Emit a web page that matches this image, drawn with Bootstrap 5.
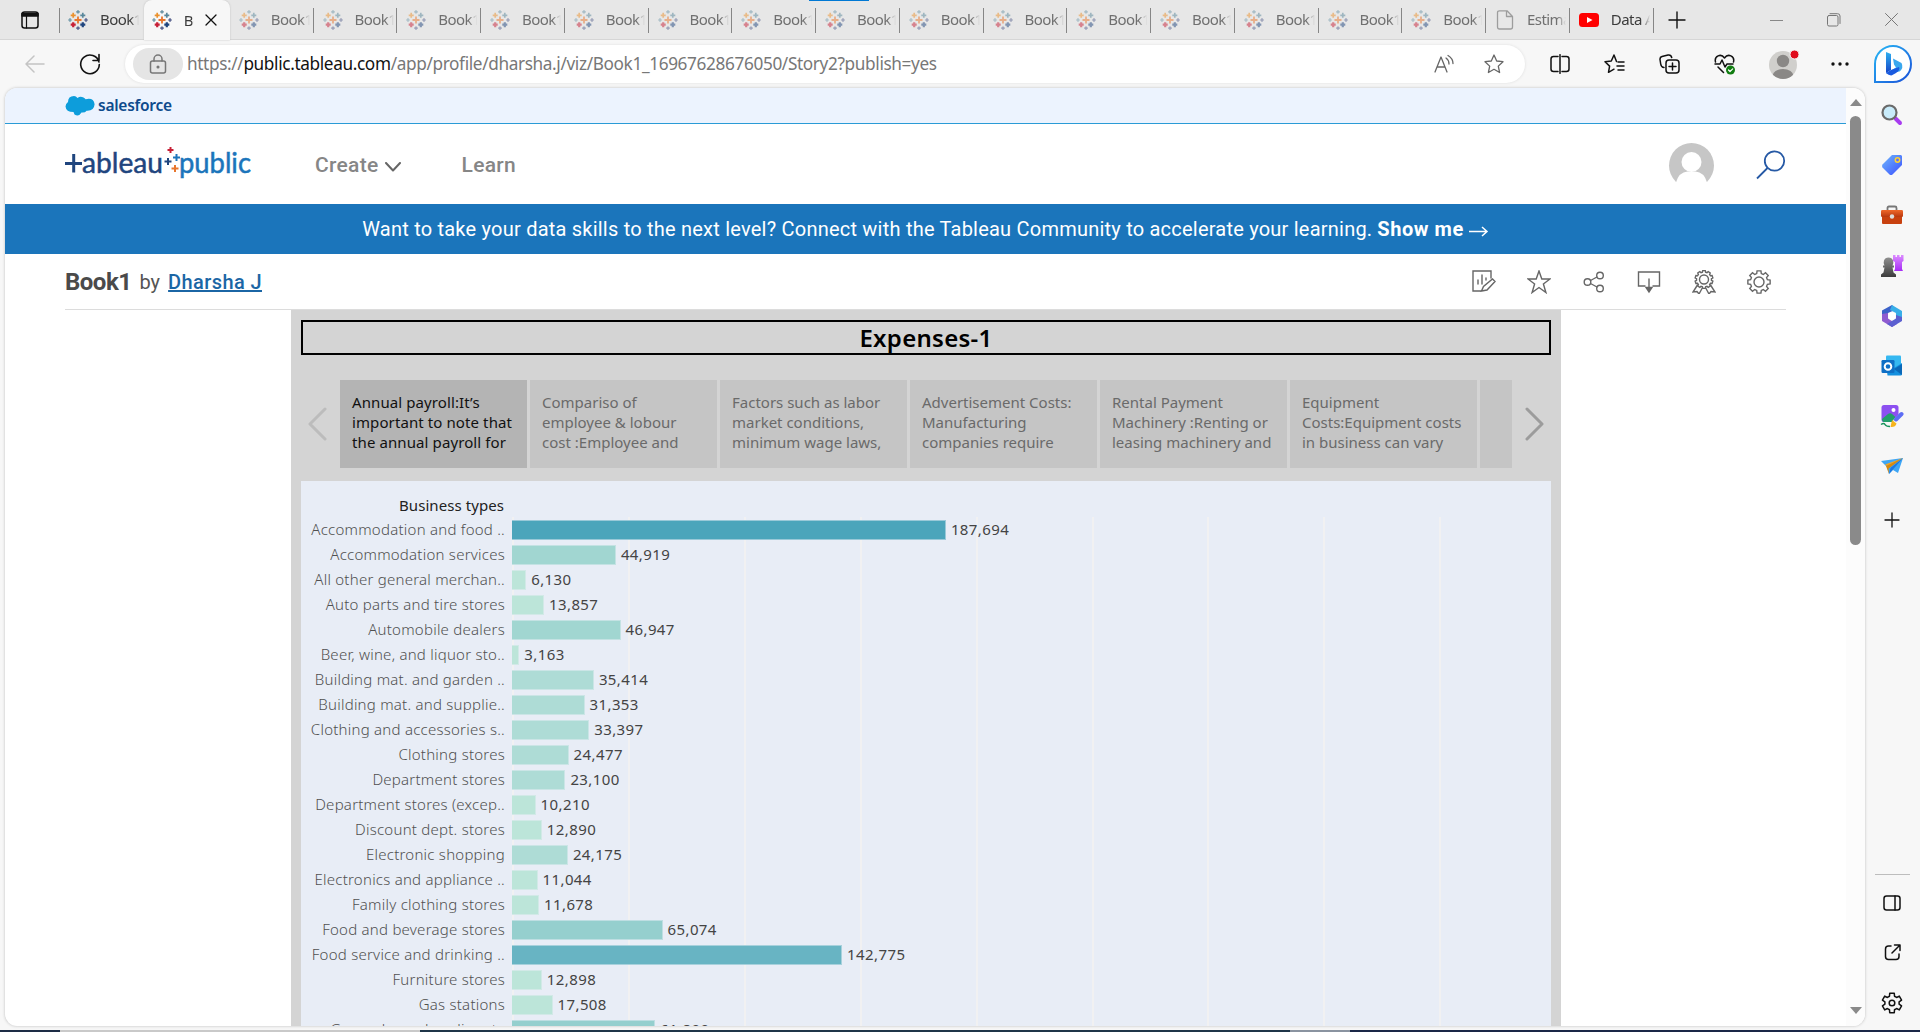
<!DOCTYPE html>
<html lang="en">
<head>
<meta charset="utf-8">
<title>Book1 by Dharsha J | Tableau Public</title>
<link href="https://cdn.jsdelivr.net/npm/bootstrap@5.3.0/dist/css/bootstrap.min.css" rel="stylesheet">
<style>
body{width:1920px;height:1032px;overflow:hidden;background:#f7f7f7;font-family:"Noto Sans","Open Sans",sans-serif;color:#333}
svg{display:block;flex:none}
.ic{fill:none;stroke:#111;stroke-width:1.5;stroke-linecap:round;stroke-linejoin:round}
.tabstrip{height:40px;background:#e7e7e7;border-bottom:1px solid #d6d6d6;position:relative}
.menu-btn{width:60px;height:39px;padding-left:21px;position:relative}
.btab{width:83.75px;height:39px;padding-left:8px;position:relative;font-size:15px;color:#707070}
.btab.dim,.btab.sep{padding-left:9px}
.btab.sep::after,.menu-btn::after{content:"";position:absolute;right:0;top:8px;width:1px;height:25px;background:#868686}
.btab .glyph{width:20px}
.btab .t{margin-left:12px;width:39px;overflow:hidden;white-space:nowrap;letter-spacing:-.55px;-webkit-mask-image:linear-gradient(90deg,#000 78%,transparent 100%);mask-image:linear-gradient(90deg,#000 78%,transparent 100%)}
.btab.dim svg{opacity:.5}
.btab.lit{color:#3c3c3c}
.btab.active{width:86px;height:40px;background:#f7f7f7;border-radius:8px 8px 0 0;color:#3c3c3c;box-shadow:0 0 2px #bbb}
.btab.active .t{width:10px}
.accent{position:absolute;left:809px;top:0;width:60px;height:1px;background:#0078d4}
.toolbar{height:48px;background:#f7f7f7}
.cell{width:55px;height:48px}
.addr{width:1400px;height:38px;background:#fff;border-radius:19px;box-shadow:0 0 3px #ddd;padding-left:8px}
.lock{width:50px;height:32px;border-radius:16px;background:#e5e5e5}
.url{font-size:17.2px;letter-spacing:-.355px;color:#777;margin-left:4px;white-space:nowrap}
.url b{font-weight:400;color:#111}
.page{width:1860px;height:938px;margin-left:5px;background:#fff;border-radius:12px;overflow:hidden;box-shadow:0 0 3px #bbb}
.doc{width:1841px;height:938px;overflow:hidden}
.sfbar{height:36px;background:#ecf3fe;border-bottom:1px solid #2a9bd6;padding-left:60px}
.sfname{font-size:15.5px;letter-spacing:-.25px;font-weight:600;color:#0d4a8c;margin-left:3px}
.hdr{height:80px;padding-left:60px;padding-right:60px}
.nav-t{font-family:Roboto,sans-serif;font-weight:500;font-size:21px;letter-spacing:.3px;color:#868686;margin-top:3px}
.promo{height:50px;background:#1b75bb;color:#fff;font-family:Roboto,sans-serif;font-size:20px;font-weight:400;letter-spacing:.22px}
.promo b{letter-spacing:.55px;margin-left:5px}
.titlerow{height:56px;margin:0 60px;border-bottom:1px solid #dcdcdc;font-family:Roboto,sans-serif;white-space:nowrap;width:1721px}
.wb{font-size:24px;font-weight:700;letter-spacing:-.5px;color:#4a4a4a}
.by{font-size:20px;color:#555;margin-left:8px}
.au{font-size:20px;color:#1b66a5;margin-left:8px;font-weight:500;letter-spacing:.4px}
.viz{width:1270px;height:716px;margin-left:286px;background:#d4d4d4;padding:10px 10px 0}
.vtitle{height:35px;border:2px solid #000;color:#000;font-weight:600;font-size:24px;letter-spacing:.28px}
.story{height:88px;margin-top:25px}
.arrow{width:39px}
.pt{width:187px;height:88px;background:#c5c5c5;color:#6a6a6a;font-size:15px;line-height:20px;padding:12px 0 0 12px;white-space:nowrap}
.pt.on{background:#b4b4b4;color:#111;letter-spacing:.1px}
.pt.cut{width:32px}
.panel{margin-top:13px;height:560px;background:#e8edf6;padding-top:12px}
.bt{height:24px;width:203px;font-size:15px;line-height:24px;color:#222;letter-spacing:.07px}
.plot{background-image:repeating-linear-gradient(90deg,#f1f1f2 0 2px,transparent 2px 115.9px);background-position:211px 0;background-repeat:no-repeat;background-size:929px 100%}
.r{height:25px;font-size:15px;line-height:25px;white-space:nowrap}
.rl{width:204px;margin-right:7px;color:#505050;font-weight:300;letter-spacing:.24px}
.bar{height:20px;border:solid rgba(232,237,246,.5);border-width:1px 1px 1px 0}
.rv{margin-left:5px;color:#444;letter-spacing:.4px}
.sb{width:19px;background:#fcfcfc}
.thumb{width:11px;height:429px;border-radius:6px;background:#8a8a8a;margin-top:10px}
.side{width:54px;height:942px;padding-top:2px}
.side .s{height:50.2px}
.rule-s{width:35px;height:1px;background:#bdbdbd;margin-bottom:2px}
.bottom{height:2px;background:linear-gradient(90deg,#1d2c45 0 60px,#c9c9c9 60px 420px,#1f3548 420px 1290px,#8a93a0 1290px 1350px,#1a2747 1350px)}
</style>
<script src="https://cdn.jsdelivr.net/npm/bootstrap@5.3.0/dist/js/bootstrap.bundle.min.js"></script>
</head>
<body>
<svg width="0" height="0" style="position:absolute">
<defs>
<symbol id="tab" viewBox="0 0 20 20"><g fill="none" stroke-width="1.7">
<path stroke="#e8762d" stroke-width="1.8" d="M10 6.5v7M6.5 10h7"/>
<path stroke="#eb912c" d="M5.2 2.8v5M2.7 5.3h5"/><path stroke="#59879b" d="M14.8 2.8v5M12.3 5.3h5"/>
<path stroke="#c72037" stroke-width="2.2" d="M5.2 12.2v5M2.7 14.7h5"/><path stroke="#1f457e" stroke-width="2.2" d="M14.8 12.2v5M12.3 14.7h5"/>
<path stroke="#6f97a8" d="M10 .2v3.4M8.3 1.9h3.4"/><path stroke="#5c6692" d="M10 16.4v3.4M8.3 18.1h3.4M18 8.3v3.4M16.3 10h3.4"/><path stroke="#7aa0b0" d="M2 8.3v3.4M.3 10h3.4"/></g></symbol>
<linearGradient id="bl" x1="0" y1="0" x2="1" y2="1"><stop offset="0" stop-color="#28b8f5"/><stop offset="1" stop-color="#1a50d8"/></linearGradient>
<linearGradient id="bg" x1="0" y1="0" x2="0" y2="1"><stop offset="0" stop-color="#2fb0f0"/><stop offset="1" stop-color="#1546c8"/></linearGradient>
<linearGradient id="tg" x1="0" y1="0" x2="1" y2="1"><stop offset="0" stop-color="#6fb8fb"/><stop offset="1" stop-color="#3b4fff"/></linearGradient>
<linearGradient id="pk" x1="0" y1="0" x2="0" y2="1"><stop offset="0" stop-color="#dc8cff"/><stop offset="1" stop-color="#a62cf5"/></linearGradient>
<linearGradient id="og" x1="0" y1="0" x2="0" y2="1"><stop offset="0" stop-color="#f0682a"/><stop offset="1" stop-color="#b8380f"/></linearGradient>
<linearGradient id="gy" x1="0" y1="0" x2="0" y2="1"><stop offset="0" stop-color="#909090"/><stop offset="1" stop-color="#3c3c3c"/></linearGradient>
</defs></svg>

<div class="tabstrip d-flex align-items-start" id="tabs">
  <div class="menu-btn d-flex align-items-center"><svg class="ic" width="18" height="18" viewBox="0 0 18 18"><rect x="1" y="1" width="16" height="16" rx="2.5"/><path fill="#111" d="M1 2.5h16V5H1z"/><path d="M5.5 5v12" stroke-width="1.2"/></svg></div>
</div>

<div class="toolbar d-flex align-items-center">
  <div class="d-flex justify-content-center cell" style="margin-left:7px"><svg class="align-self-center ic" style="stroke:#c4c4c4;margin-top:-1px" width="20" height="18"><path d="M19 9H1M9 1L1 9l8 8"/></svg></div>
  <div class="d-flex align-items-center justify-content-center cell"><svg class="ic" style="margin-top:-1px" width="22" height="22"><path d="M20 9A9.3 9.3 0 1 0 20.3 11.500M20 1.500V7.500H14" stroke-width="1.6"/></svg></div>
  <div class="addr d-flex align-items-center ms-auto">
    <div class="lock d-flex align-items-center justify-content-center"><svg class="ic" style="stroke:#777" width="18" height="20"><rect x="1.500" y="7" width="15" height="12" rx="2"/><path d="M5 7V5a4 4 0 0 1 8 0v2"/><circle cx="9" cy="13" r=".8" fill="#777"/></svg></div>
    <div class="url">https://<b>public.tableau.com</b>/app/profile/dharsha.j/viz/Book1_16967628676050/Story2?publish=yes</div>
    <svg class="ic ms-auto" style="stroke:#666" width="20" height="20"><path stroke-width="1.300" d="M1 18L7 3l6 15M3 13h8M12 4q3 2 3 6M14 1.500q5 3 5 8"/></svg>
    <svg class="ic" style="stroke:#666;margin-left:30px;margin-right:21px" width="20" height="20"><path stroke-width="1.300" d="M10 1l2.700 6 6.300.7-4.700 4.400 1.300 6.400-5.600-3.200-5.600 3.200 1.300-6.400L1 7.700 7.300 7z"/></svg>
  </div>
  <div style="width:7px"></div>
  <div class="cell d-flex align-items-center justify-content-center"><svg class="ic" width="20" height="20"><path d="M8 2.500H3.500Q1 2.500 1 5v10q0 2.500 2.500 2.500H8M12 2.500h4.500Q19 2.500 19 5v10q0 2.500-2.500 2.500H12M10 .7v18.600"/></svg></div>
  <div class="cell d-flex align-items-center justify-content-center"><svg class="ic" width="21" height="20"><path d="M12.500 7.500L10 1 7.300 7 1 7.700l4.600 4.400L4.500 18.300 10 15.200M14 8h6M13 12h7M14 16h6"/></svg></div>
  <div class="cell d-flex align-items-center justify-content-center"><svg class="ic" width="21" height="20"><rect x="7" y="6" width="13" height="13" rx="3"/><path d="M13.500 9v7M10 12.500h7M5 13.500C2.500 13.500 2 12 1.700 10L1 5.500Q.8 3 3 2.500L9 1q3-.5 3.700 2.500"/></svg></div>
  <div class="cell d-flex align-items-center justify-content-center"><svg class="ic" width="22" height="21"><path d="M1.500 8C0 2 7-1 10.500 4 14-1 21 2 19.500 8M1 10h5l2-4 3 7 2-3h6M4 13l5.500 5.500"/><circle cx="16.500" cy="16" r="4.500" fill="#107c10" stroke="none"/><path stroke="#fff" stroke-width="1.200" d="M14.500 16l1.500 1.500 2.700-2.700"/></svg></div>
  <div class="d-flex align-items-center justify-content-center" style="width:62px"><svg style="margin-left:2px" width="30" height="30"><clipPath id="c1"><circle cx="14" cy="16" r="14"/></clipPath><g clip-path="url(#c1)"><path fill="#d0cfcc" d="M0 0h30v30H0z"/><circle cx="14" cy="12" r="6.200" fill="#8a8886"/><ellipse cx="14" cy="27" rx="10.500" ry="7" fill="#8a8886"/></g><circle cx="25.500" cy="5.500" r="4.500" fill="#e00b1c" stroke="#f7f7f7"/></svg></div>
  <div class="d-flex align-items-center justify-content-center" style="width:51px"><svg width="18" height="4" fill="#111"><circle cx="2" cy="2" r="1.700"/><circle cx="9" cy="2" r="1.700"/><circle cx="16" cy="2" r="1.700"/></svg></div>
  <div class="cell d-flex align-items-center justify-content-center"><svg width="40" height="40"><path d="M2 38V20A18 18 0 1 1 20 38z" fill="#fff" stroke="url(#bl)" stroke-width="2"/><path fill="url(#bg)" d="M13 8l5 2v16l-5 3z"/><path fill="#3aa7ee" d="M20 14.500l8.500 4.500q2.500 5-2 8.500L13 29.500l10-6-2-3z"/><path fill="#1a5be0" d="M13 29l5-3 8-3q1.500 3-3 6l-4 2.300q-3 .5-6-2.300z"/></svg></div>
</div>

<div class="d-flex" style="height:942px">
  <div class="page d-flex">
    <div class="doc">
      <div class="sfbar d-flex align-items-center"><svg width="30" height="21"><path fill="#0d9ddb" d="M3 7Q3 1 9 1q2 0 3.500 2Q15 1 18 2.200q2 1 2.600 2 8-2 9 5-.6 7-8 6.500Q20 18 16.500 17.500 14 22 9.500 19.500L8.500 17Q1 17 .5 11.500 .6 8.500 3 7z"/></svg><span class="sfname">salesforce</span></div>
      <div class="hdr d-flex align-items-center">
        <svg style="margin-top:-2px" width="187" height="44" viewBox="0 0 187 44" font-family="Lato,sans-serif" font-size="28"><path stroke="#1f457e" stroke-width="3" d="M0 22.500h17M8.700 13v18.500"/><text x="17" y="31.500" textLength="81" lengthAdjust="spacingAndGlyphs" fill="#1f457e" stroke="#1f457e" stroke-width=".5">ableau</text><text x="114" y="31.500" textLength="72" lengthAdjust="spacingAndGlyphs" fill="#1b75bb" stroke="#1b75bb" stroke-width=".5">public</text><g stroke-width="2"><path stroke="#c72037" d="M105.500 6v6M102.500 9h6"/><path stroke="#1f457e" d="M103 17v7M99.500 20.500h7"/><path stroke="#1b75bb" d="M111.500 13v7M108 16.500h7"/><path stroke="#e8762d" d="M110 24v7M106.500 27.500h7"/></g></svg>
        <span class="nav-t" style="margin-left:63px">Create</span><svg class="ic" style="stroke:#666;stroke-width:2;margin:5px 0 0 6px" width="16" height="10"><path d="M1 1l7 7.500L15 1"/></svg>
        <span class="nav-t" style="margin-left:61px">Learn</span>
        <svg class="ms-auto" width="46" height="44"><clipPath id="c2"><path d="M0 0h46v41H0z"/></clipPath><g clip-path="url(#c2)"><circle cx="23.500" cy="23.500" r="22.500" fill="#c6c6c6"/><circle cx="23.500" cy="20" r="10" fill="#fff"/><path fill="#fff" d="M7.500 42q3-12 12-12.500h8Q36.500 30 39.500 42z"/></g></svg>
        <svg style="margin-left:42px;margin-top:2px" width="30" height="30" fill="none" stroke="#2659a5" stroke-width="1.800"><circle cx="18.500" cy="11" r="9.700"/><path d="M11.500 18L1 28.500"/></svg>
      </div>
      <div class="promo d-flex align-items-center justify-content-center"><span>Want to take your data skills to the next level? Connect with the Tableau Community to accelerate your learning.</span><b>Show me</b><svg style="margin:4px 0 0 5px" width="20" height="11" fill="none" stroke="#fff" stroke-width="1.500"><path d="M0 5.500h18M13 1l5 4.500-5 4.500"/></svg></div>
      <div class="titlerow d-flex align-items-center">
        <span class="wb">Book1</span><span class="by">by</span><u class="au">Dharsha J</u>
        <div class="d-flex ms-auto" id="acts"></div>
      </div>
      <div class="viz">
        <div class="vtitle d-flex align-items-center justify-content-center"><span>Expenses-1</span></div>
        <div class="story d-flex">
          <div class="arrow d-flex align-items-center"><svg class="ic" style="stroke:#bcbcbc;stroke-width:3;margin-left:6px" width="20" height="34"><path d="M18 2L3 17l15 15"/></svg></div>
          <div class="d-flex" style="gap:3px">
            <div class="pt on">Annual payroll:It’s<br>important to note that<br>the annual payroll for</div>
            <div class="pt">Compariso of<br>employee &amp; lobour<br>cost :Employee and</div>
            <div class="pt">Factors such as labor<br>market conditions,<br>minimum wage laws,</div>
            <div class="pt">Advertisement Costs:<br>Manufacturing<br>companies require</div>
            <div class="pt">Rental Payment<br>Machinery :Renting or<br>leasing machinery and</div>
            <div class="pt">Equipment<br>Costs:Equipment costs<br>in business can vary</div>
            <div class="pt cut"></div>
          </div>
          <div class="ms-auto d-flex align-items-center"><svg class="ic" style="stroke:#9c9c9c;stroke-width:3;margin-right:6px" width="20" height="34"><path d="M2 2l15 15L2 32"/></svg></div>
        </div>
        <div class="panel">
          <div class="bt text-end">Business types</div>
          <div class="plot" id="plot"></div>
        </div>
      </div>
    </div>
    <div class="sb d-flex flex-column align-items-center">
      <svg width="12" height="7" style="margin-top:11px"><path fill="#8a8a8a" d="M0 7L6 0l6 7z"/></svg>
      <div class="thumb"></div>
      <svg width="12" height="7" style="margin-top:auto;margin-bottom:12px"><path fill="#8a8a8a" d="M0 0l6 7 6-7z"/></svg>
    </div>
  </div>
  <div class="side d-flex flex-column align-items-center">
    <div class="s d-flex align-items-center"><svg width="24" height="24"><path stroke="#a83cf0" stroke-width="4" stroke-linecap="round" d="M15.500 15.500l4.500 4.500"/><circle cx="9.500" cy="9.500" r="7" fill="#c8ebfa" stroke="#6a6a6a" stroke-width="2.200"/></svg></div>
    <div class="s d-flex align-items-center"><svg width="24" height="24"><path fill="url(#tg)" d="M12 2h9l1 1v9L12.500 21.500q-1.500 1-3 0l-7-7q-1-1.500 0-3z"/><circle cx="17.500" cy="7" r="2.200" fill="#5f6fff" stroke="#ffd42e" stroke-width="1.500"/></svg></div>
    <div class="s d-flex align-items-center"><svg width="24" height="24"><path fill="none" stroke="#777" stroke-width="1.800" d="M7.500 8V5q0-1.500 1.500-1.500h6q1.500 0 1.500 1.500v3"/><rect x="2" y="11" width="20" height="10" rx="1" fill="#c8410f"/><rect x="1" y="7" width="22" height="7" rx="1.200" fill="url(#og)"/><circle cx="12" cy="13.500" r="2.200" fill="#ddd"/></svg></div>
    <div class="s d-flex align-items-center"><svg width="24" height="24"><path fill="url(#pk)" d="M13 1h2.500v2H17V1h2.500v2H21V1h2.500v6l-1.500 1v7l1 2h-9l1-2V8l-2-1z"/><path fill="url(#gy)" d="M1 23v-2.500l2.500-2 1-5H3v-2h1.500q-1.500-2-.5-5Q5 3.500 8.500 3.500T13 6.500q1 3-.5 5H14v2h-1.500l1 5 2.500 2V23z"/></svg></div>
    <div class="s d-flex align-items-center"><svg width="24" height="24"><path fill="#3b62c9" d="M12 1L2 6.500V14l6-2V9l8-3.500z"/><path fill="#38aee8" d="M12 1l10 6v9l-6-3.500V9L10 6z"/><path fill="#8e5bd0" d="M2 10v7l10 6 5-3-6-3.500-3-2V9z"/><path fill="#5b5fd0" d="M22 13v4l-10 6-5-3 9-5.500V11z"/><circle cx="12" cy="12" r="3.800" fill="#fff"/></svg></div>
    <div class="s d-flex align-items-center"><svg width="24" height="24"><rect x="6" y="1.500" width="15" height="13" rx="1" fill="#35b8f1"/><path fill="#1490df" d="M6 10l8 4 8-5v11q0 1.500-1.500 1.500h-13z"/><path fill="#0a68b8" d="M14 15l8-5v11z"/><rect x="1.500" y="6" width="13" height="13" rx="1.200" fill="#0f6fc5"/><circle cx="8" cy="12.500" r="3.300" fill="none" stroke="#fff" stroke-width="2"/></svg></div>
    <div class="s d-flex align-items-center"><svg width="24" height="24"><rect x="1.500" y="1" width="17" height="17" rx="2.500" fill="#8c50f0"/><circle cx="13.500" cy="6" r="2" fill="#fff"/><path fill="#22a06a" d="M2 15l6-5q2-1.500 4 0l5 4.500-4 3.500H4q-2 0-2-3z"/><path fill="#f7f7f7" d="M1 18.500h11l2-3.500 6-6v14H1z"/><path stroke="#5d6df5" stroke-width="4" stroke-linecap="round" d="M21.500 10l-5.500 5.500"/><path fill="#f5b41e" d="M12 16l4.500 3.500q-1 4-6 3.500z"/><path fill="none" stroke="#19935c" stroke-width="1.500" d="M1 20.500q3-2 4 0t5 2"/></svg></div>
    <div class="s d-flex align-items-center"><svg width="24" height="24"><path fill="#3ea6f5" d="M1 7l22-3-5 15-5-3-4 4-2-7z"/><path fill="#f5a623" d="M23 4L7 12l-2-1.500z"/><path fill="#d98a0c" d="M23 4L8.500 14.500 9 20l-3-8z"/><path fill="#1d78e0" d="M23 4L9 20l1.500-6z"/></svg></div>
    <div class="d-flex align-items-center" style="height:57px"><svg class="ic" width="16" height="16"><path d="M8 1v14M1 8h14" stroke-width="1.300"/></svg></div>
    <div class="rule-s mt-auto"></div>
    <div class="s d-flex align-items-center"><svg class="ic" width="18" height="16"><rect x="1" y="1" width="16" height="14" rx="2.500"/><path d="M12 1v14"/></svg></div>
    <div class="s d-flex align-items-center"><svg class="ic" width="17" height="17"><path d="M7 2H4.500Q1.500 2 1.500 5v7.500q0 3 3 3H12q3 0 3-3V10M10.500 1H16v5.500M16 1L8 9"/></svg></div>
    <div class="s d-flex align-items-center" style="margin-bottom:2px"><svg class="ic" width="22" height="22" viewBox="-11 -11 22 22"><path id="gear2" d=""/><circle r="2.800"/></svg></div>
  </div>
</div>
<div class="bottom"></div>
<script>
const glyph='<svg width="20" height="20"><use href="#tab"/></svg>';
const file='<svg class="ic" style="stroke:#555" width="20" height="20"><path stroke-width="1.300" d="M4.500 .8H12L17.500 6.500V17q0 2-2 2h-11q-2 0-2-2V2.800q0-2 2-2zM11.500 1v5.500h6"/></svg>';
const yt='<svg width="20" height="20"><rect y="3" width="20" height="14" rx="3.500" fill="#f00"/><path fill="#fff" d="M8 7l5.500 3L8 13z"/></svg>';
const x='<svg class="ic" style="margin-left:11px" width="12" height="12"><path stroke-width="1.300" d="M1 1l10 10M11 1L1 11"/></svg>';
let h='';
for(let i=0;i<19;i++){
  const cls=i===0?'lit':i===1?'active':i===18?'lit sep':'dim sep';
  const g=i===17?file:i===18?yt:glyph, t=i===17?'Estimate':i===18?'Data Analyst':'Book1';
  h+=`<div class="btab ${cls} d-flex align-items-center"><span class="glyph">${g}</span><span class="t">${t}</span>${i===1?x:''}</div>`;
}
h+=`<div class="d-flex align-items-center justify-content-center" style="width:46px;height:39px"><svg class="ic" width="18" height="18"><path stroke-width="1.400" d="M9 1v16M1 9h16"/></svg></div>
<div class="d-flex ms-auto" style="height:39px;width:172px">
<div class="flex-fill d-flex align-items-center justify-content-center"><svg width="13" height="2"><path stroke="#888" d="M0 1.500h13"/></svg></div>
<div class="flex-fill d-flex align-items-center justify-content-center"><svg class="ic" style="stroke:#777;stroke-width:1" width="14" height="14"><rect x=".5" y="2.500" width="10.500" height="10.500" rx="1.500"/><path d="M3 .7h7.500Q13 .7 13 3v7.500"/></svg></div>
<div class="flex-fill d-flex align-items-center justify-content-center"><svg class="ic" style="stroke:#777;stroke-width:1" width="13" height="13"><path d="M.5.5l12 12M12.500.5l-12 12"/></svg></div></div><div class="accent"></div>`;
document.getElementById('tabs').insertAdjacentHTML('beforeend',h);
// outline of a cog wheel with n teeth
function gear(n,ro,ri){let d='';for(let i=0;i<n;i++){[[-.34,ri],[-.22,ro],[.22,ro],[.34,ri]].forEach(([o,r])=>{const a=(i+o)*2*Math.PI/n;d+=(d?'L':'M')+(Math.sin(a)*r).toFixed(2)+' '+(-Math.cos(a)*r).toFixed(2);});}return d+'z';}
document.getElementById('gear2').setAttribute('d',gear(6,10,7.2));
const acts=[
 '<path d="M9 21H1V1h18v7M6 14v-4M10 14V5M14 10V8M9.500 21l2-4.500L20.500 9l2.500 2.500-8 8.500z"/>',
 '<path d="M12 1l2.800 8H23l-6.600 5 2.500 8.500L12 17.500 5.100 22.500 7.600 14 1 9h8.200z"/>',
 '<circle cx="5.500" cy="12" r="3.300"/><circle cx="18" cy="5.500" r="3.300"/><circle cx="18" cy="18.500" r="3.300"/><path d="M8.500 10.500L15 7M8.500 13.500L15 17"/>',
 '<path d="M8 16H1.500V2h21v14H16M12 9v12"/><path fill="#666" d="M9 17.500h6L12 22z"/>',
 '<g transform="translate(12 9.500)"><path d="'+gear(10,9,7.500)+'"/><circle r="4.500"/></g><path d="M5.500 15L1 22l4-.5 2 2.500 3-5.500M18.500 15l4.500 7-4-.5-2 2.500-3-5.500"/>',
 '<g transform="translate(12 12)"><path d="'+gear(8,11.300,8.700)+'"/><circle r="5"/></g>'];
document.getElementById('acts').innerHTML=acts.map(a=>`<div class="d-flex justify-content-center" style="width:55px"><svg class="ic" style="stroke:#666;stroke-width:1.400;stroke-linejoin:miter" width="24" height="24">${a}</svg></div>`).join('');
const rows=[['Accommodation and food ..',187694],['Accommodation services',44919],['All other general merchan..',6130],['Auto parts and tire stores',13857],['Automobile dealers',46947],['Beer, wine, and liquor sto..',3163],['Building mat. and garden ..',35414],['Building mat. and supplie..',31353],['Clothing and accessories s..',33397],['Clothing stores',24477],['Department stores',23100],['Department stores (excep..',10210],['Discount dept. stores',12890],['Electronic shopping',24175],['Electronics and appliance ..',11044],['Family clothing stores',11678],['Food and beverage stores',65074],['Food service and drinking ..',142775],['Furniture stores',12898],['Gas stations',17508],['General merchandise st..',61899]];
const col=v=>v>180000?'#4ba5bb':v>100000?'#68b4c3':v>60000?'#95cfce':v>40000?'#a1d6d1':v>20000?'#aedcd6':'#bce5d9';
document.getElementById('plot').innerHTML=rows.map(([l,v])=>`<div class="r d-flex align-items-center"><div class="rl text-end">${l}</div><div class="bar" style="width:${(v*.002312).toFixed(1)}px;background-color:${col(v)}"></div><span class="rv">${v.toLocaleString('en-US')}</span></div>`).join('');
</script>
</body>
</html>
